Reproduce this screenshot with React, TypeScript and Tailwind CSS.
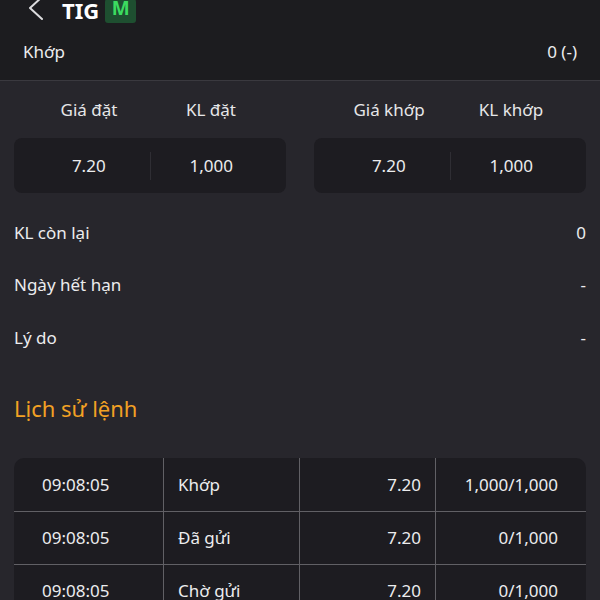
const history = [
  { time: "09:08:05", status: "Khớp", price: "7.20", qty: "1,000/1,000" },
  { time: "09:08:05", status: "Đã gửi", price: "7.20", qty: "0/1,000" },
  { time: "09:08:05", status: "Chờ gửi", price: "7.20", qty: "0/1,000" },
];

function PairCard({ labels, values }: { labels: [string, string]; values: [string, string] }) {
  return (
    <div className="flex-1">
      <div className="flex h-[57px] items-center px-[14px] text-[#e6e6e8]">
        <div className="flex-1 text-center">{labels[0]}</div>
        <div className="flex-1 text-center">{labels[1]}</div>
      </div>
      <div className="flex h-[55px] items-center rounded-lg bg-[#1d1c21] px-[14px]">
        <div className="flex-1 text-center">{values[0]}</div>
        <div className="h-[28px] w-px bg-[#2f2e34]" />
        <div className="flex-1 text-center">{values[1]}</div>
      </div>
    </div>
  );
}

export default function App() {
  return (
    <div
      className="h-[600px] w-[600px] overflow-hidden bg-[#27262c] text-[17px] text-[#ececee]"
      style={{ fontFamily: '"Noto Sans", "Open Sans", sans-serif' }}
    >
      <div className="bg-[#1c1c1f]">
        <div className="flex h-[23px] items-end pl-[28px]">
          <svg width="16" height="26" viewBox="0 0 16 26" className="mb-[1px]" fill="none">
            <path d="M14 1 L2 12 L14 23" stroke="#dcdcde" strokeWidth="2" strokeLinecap="round" strokeLinejoin="round" />
          </svg>
          <span className="ml-[18px] mb-[2px] text-[22px] font-bold leading-none text-white">TIG</span>
          <span className="ml-[6px] flex h-[24px] w-[31px] items-end justify-center rounded-[3px] bg-[#1e4f30] pb-[5px] text-[19px] font-bold leading-none text-[#3cdc60]">
            M
          </span>
        </div>
        <div className="flex h-[57px] items-center justify-between px-[23px]">
          <span>Khớp</span>
          <span>0 (-)</span>
        </div>
      </div>
      <div className="h-px bg-[#3a393f]" />

      <div className="flex gap-7 px-[14px]">
        <PairCard labels={["Giá đặt", "KL đặt"]} values={["7.20", "1,000"]} />
        <PairCard labels={["Giá khớp", "KL khớp"]} values={["7.20", "1,000"]} />
      </div>

      <div className="mt-[13px] px-[14px]">
        <div className="flex h-[53px] items-center justify-between">
          <span>KL còn lại</span>
          <span>0</span>
        </div>
        <div className="flex h-[52px] items-center justify-between">
          <span>Ngày hết hạn</span>
          <span>-</span>
        </div>
        <div className="flex h-[53px] items-center justify-between">
          <span>Lý do</span>
          <span>-</span>
        </div>
        <div className="mt-[28px] text-[22px] text-[#f2a124]">Lịch sử lệnh</div>

        <div className="mt-[33px] overflow-hidden rounded-t-[10px] bg-[#1d1c21]">
          {history.map((row, i) => (
            <div
              key={i}
              className={`grid h-[53px] grid-cols-[150px_136px_136px_1fr] ${
                i > 0 ? "border-t border-[#616065]" : ""
              }`}
            >
              <div className="flex items-center border-r border-[#616065] pl-[28px]">{row.time}</div>
              <div className="flex items-center border-r border-[#616065] pl-[14px]">{row.status}</div>
              <div className="flex items-center justify-end border-r border-[#616065] pr-[14px]">{row.price}</div>
              <div className="flex items-center justify-end pr-[28px]">{row.qty}</div>
            </div>
          ))}
        </div>
      </div>
    </div>
  );
}
